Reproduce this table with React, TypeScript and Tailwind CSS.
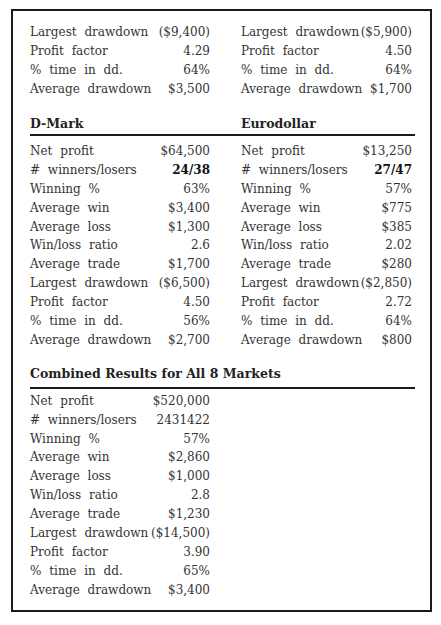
import React from 'react'

type Row = [string, string]

const TOP_LEFT: Row[] = [
  ['Largest drawdown', '($9,400)'],
  ['Profit factor', '4.29'],
  ['% time in dd.', '64%'],
  ['Average drawdown', '$3,500'],
]

const TOP_RIGHT: Row[] = [
  ['Largest drawdown', '($5,900)'],
  ['Profit factor', '4.50'],
  ['% time in dd.', '64%'],
  ['Average drawdown', '$1,700'],
]

const DMARK: Row[] = [
  ['Net profit', '$64,500'],
  ['# winners/losers', '24/38'],
  ['Winning %', '63%'],
  ['Average win', '$3,400'],
  ['Average loss', '$1,300'],
  ['Win/loss ratio', '2.6'],
  ['Average trade', '$1,700'],
  ['Largest drawdown', '($6,500)'],
  ['Profit factor', '4.50'],
  ['% time in dd.', '56%'],
  ['Average drawdown', '$2,700'],
]

const EURODOLLAR: Row[] = [
  ['Net profit', '$13,250'],
  ['# winners/losers', '27/47'],
  ['Winning %', '57%'],
  ['Average win', '$775'],
  ['Average loss', '$385'],
  ['Win/loss ratio', '2.02'],
  ['Average trade', '$280'],
  ['Largest drawdown', '($2,850)'],
  ['Profit factor', '2.72'],
  ['% time in dd.', '64%'],
  ['Average drawdown', '$800'],
]

const COMBINED: Row[] = [
  ['Net profit', '$520,000'],
  ['# winners/losers', '2431422'],
  ['Winning %', '57%'],
  ['Average win', '$2,860'],
  ['Average loss', '$1,000'],
  ['Win/loss ratio', '2.8'],
  ['Average trade', '$1,230'],
  ['Largest drawdown', '($14,500)'],
  ['Profit factor', '3.90'],
  ['% time in dd.', '65%'],
  ['Average drawdown', '$3,400'],
]

function Stats({ rows, boldWl = false }: { rows: Row[]; boldWl?: boolean }) {
  return (
    <div className="flex flex-col">
      {rows.map(([label, value]) => (
        <div key={label} className="flex h-[18.9px] items-center justify-between">
          <span className="[word-spacing:4px]">{label}</span>
          <span className={boldWl && label.startsWith('#') ? 'font-bold text-[#111]' : ''}>{value}</span>
        </div>
      ))}
    </div>
  )
}

export default function App() {
  return (
    <div className="h-[625px] w-[441px] bg-white pt-[9px] font-['DejaVu_Serif',serif] text-[12px] text-[#333]">
      <div className="ml-[11px] w-[421px] border-2 border-[#1a1a1a] pb-[11px] pl-[17px] pr-[15px] pt-[12px]">
        {/* continued from previous page */}
        <div className="grid grid-cols-[180px_171px] gap-x-[31px]">
          <Stats rows={TOP_LEFT} />
          <Stats rows={TOP_RIGHT} />
        </div>

        {/* D-Mark / Eurodollar */}
        <div className="mt-[15px] grid grid-cols-[180px_171px] gap-x-[31px] text-[12.5px] font-bold text-[#222]">
          <div className="leading-[19px]">D-Mark</div>
          <div className="leading-[19px]">Eurodollar</div>
        </div>
        <div className="mt-[1.5px] h-[2px] bg-[#1a1a1a]" />
        <div className="mt-[5.5px] grid grid-cols-[180px_171px] gap-x-[31px]">
          <Stats rows={DMARK} boldWl />
          <Stats rows={EURODOLLAR} boldWl />
        </div>

        {/* Combined */}
        <div className="mt-[15px] text-[12.5px] font-bold leading-[19px] text-[#222]">
          Combined Results for All 8 Markets
        </div>
        <div className="mt-[3.5px] h-[2px] bg-[#1a1a1a]" />
        <div className="mt-[2.5px] w-[180px]">
          <Stats rows={COMBINED} />
        </div>
      </div>
    </div>
  )
}
